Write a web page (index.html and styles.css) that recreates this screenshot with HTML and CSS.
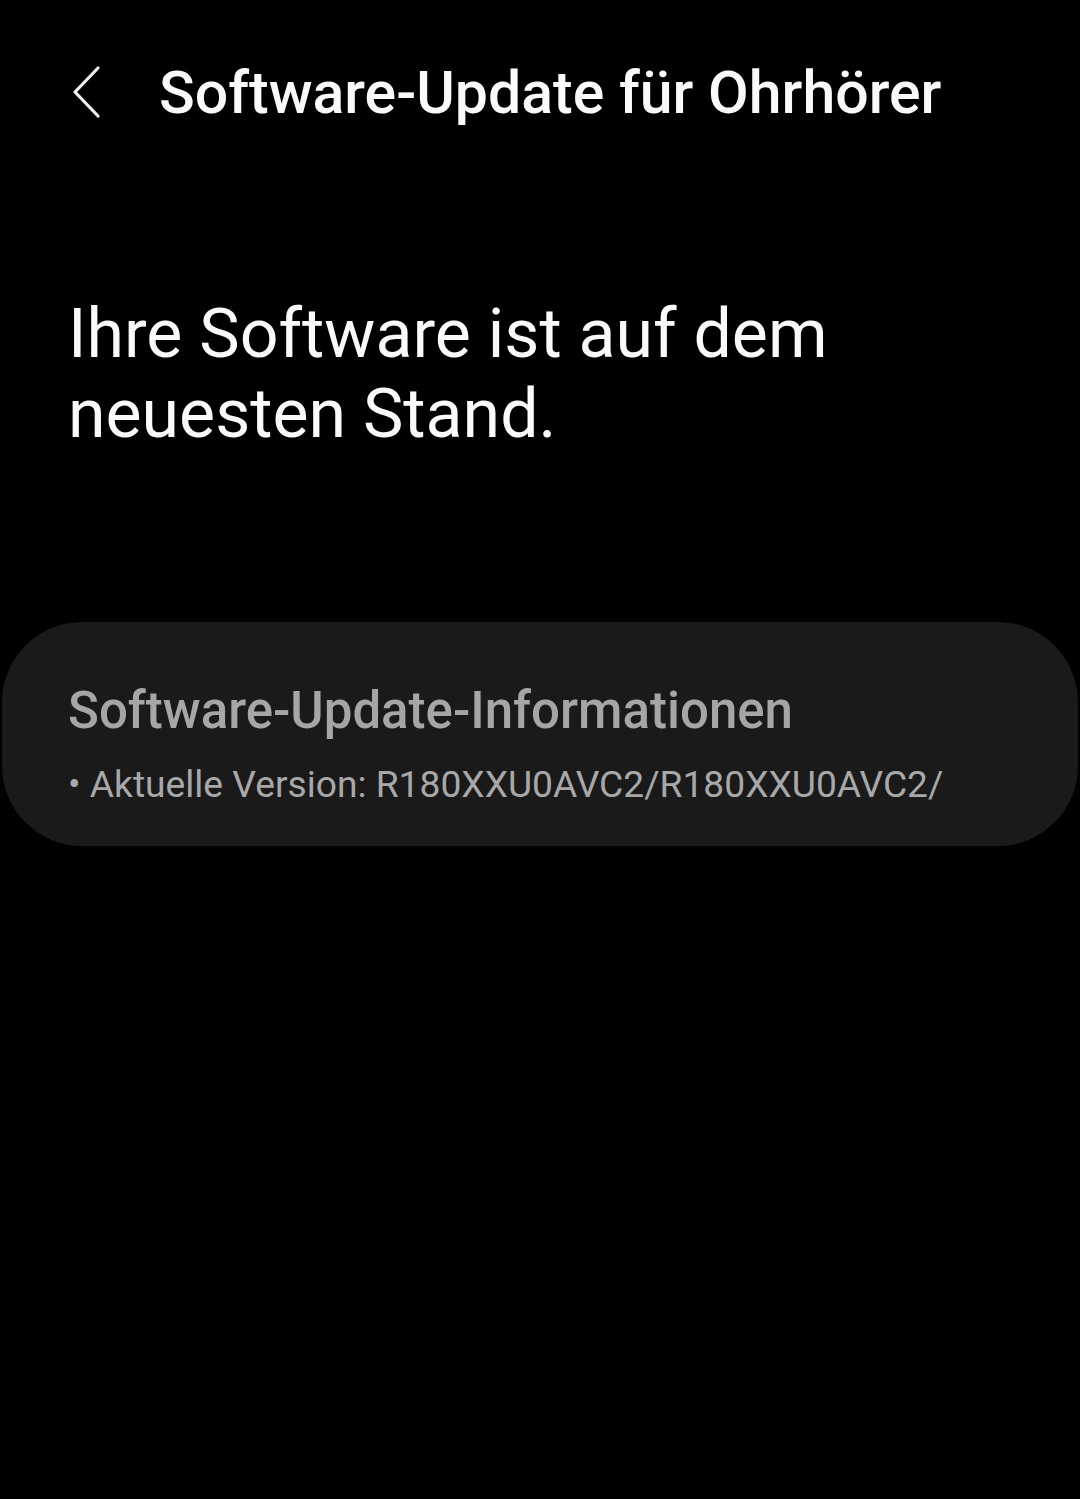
FILE: index.html
```html
<!DOCTYPE html>
<html lang="de">
<head>
    <meta charset="UTF-8">
    <meta name="viewport" content="width=device-width, initial-scale=1.0">
    <title>Software-Update für Ohrhörer</title>
    <link rel="stylesheet" href="styles.css">
</head>
<body>
    <div class="screen">
        <div class="app-bar">
            <button class="back-button" aria-label="Zurück">
                <svg width="34" height="56" viewBox="0 0 34 56">
                    <path d="M28 4 L5 28 L28 52" fill="none" stroke="#f2f2f2" stroke-width="3.2" stroke-linecap="round" stroke-linejoin="round"/>
                </svg>
            </button>
            <h1 class="app-title">Software-Update für Ohrhörer</h1>
        </div>
        <div class="status">
            <p class="status-text">Ihre Software ist auf dem neuesten Stand.</p>
        </div>
        <div class="info-card">
            <div class="info-title">Software-Update-Informationen</div>
            <div class="info-line">• Aktuelle Version: R180XXU0AVC2/R180XXU0AVC2/</div>
        </div>
    </div>
</body>
</html>
```

FILE: styles.css
```css
html, body {
    margin: 0;
    padding: 0;
    background-color: #000;
}
body {
    font-family: Roboto, "Noto Sans", Arial, sans-serif;
    color: #f5f5f5;
}
.screen {
    width: 1080px;
    min-height: 1499px;
}
.app-bar {
    display: flex;
    align-items: center;
    height: 186px;
    padding-left: 70px;
    box-sizing: border-box;
    padding-bottom: 2px;
}
.back-button {
    background: none;
    border: none;
    padding: 0;
    width: 89px;
    height: 60px;
    display: flex;
    align-items: center;
    cursor: pointer;
}
.app-title {
    margin: 0;
    font-size: 59px;
    font-weight: 500;
    letter-spacing: 0;
    color: #fafafa;
}
.status {
    padding: 108px 68px 0;
    height: 326px;
    box-sizing: border-box;
}
.status-text {
    margin: 0;
    font-size: 68px;
    line-height: 80px;
    width: 800px;
    color: #fafafa;
}
.info-card {
    margin: 110px 2px 0;
    background-color: #1a1a1a;
    border-radius: 80px;
    padding: 59px 66px 37px;
}
.info-title {
    font-size: 51px;
    font-weight: 500;
    color: #a6a6a6;
    line-height: 60px;
}
.info-line {
    font-size: 37.2px;
    color: #a8a8a8;
    margin-top: 18px;
    line-height: 50px;
}
```
